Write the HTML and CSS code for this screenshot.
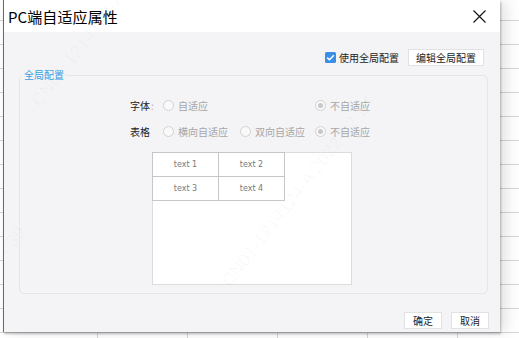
FILE: index.html
```html
<!DOCTYPE html>
<html lang="zh">
<head>
    <meta charset="UTF-8">
    <title>PC端自适应属性</title>
    <link rel="stylesheet" href="styles.css">
</head>
<body>
    <div class="dialog">
        <div class="titlebar">
            <span class="title">PC端自适应属性</span>
            <svg class="close" width="13" height="13" viewBox="0 0 13 13">
                <path d="M0.5 0.5 L12.5 12.5 M12.5 0.5 L0.5 12.5" stroke="#111" stroke-width="1.1" fill="none"/>
            </svg>
        </div>
        <div class="content">
            <div class="toprow">
                <label class="use">
                    <span class="check">
                        <svg width="11" height="11" viewBox="0 0 11 11">
                            <rect width="11" height="11" rx="1.5" fill="#3a8ee6"/>
                            <path d="M2.2 5.6 L4.5 7.8 L8.8 3.2" stroke="#fff" stroke-width="1.5" fill="none"/>
                        </svg>
                    </span>
                    使用全局配置
                </label>
                <div class="btn">编辑全局配置</div>
            </div>
            <fieldset class="group">
                <legend>全局配置</legend>
                <div class="form">
                    <div class="label">字体<span class="colon">:</span></div>
                    <div class="opt"><span class="radio"></span>自适应</div>
                    <div class="opt"></div>
                    <div class="opt"><span class="radio on"></span>不自适应</div>

                    <div class="label">表格</div>
                    <div class="opt"><span class="radio"></span>横向自适应</div>
                    <div class="opt"><span class="radio"></span>双向自适应</div>
                    <div class="opt"><span class="radio on"></span>不自适应</div>
                </div>
                <div class="preview">
                    <table class="cells">
                        <tr><td>text 1</td><td>text 2</td></tr>
                        <tr><td>text 3</td><td>text 4</td></tr>
                    </table>
                </div>
            </fieldset>
        </div>
        <div class="footer">
            <div class="btn small">确定</div>
            <div class="btn small">取消</div>
        </div>
        <!-- 水印 -->
        <span class="mark m1">CN01-1214124-A 2022-02-24</span>
        <span class="mark m2">CN01-1214124-A 2022-02-24</span>
        <span class="mark m3">CN01-1214124-A 2022-02-24 14:39</span>
    </div>
</body>
</html>
```

FILE: styles.css
```css
html, body {
    margin: 0;
    padding: 0;
}
body {
    width: 519px;
    height: 338px;
    overflow: hidden;
    font-family: "Noto Sans CJK SC", "Liberation Sans", sans-serif;
    background-color: #fff;
    background-image:
        repeating-linear-gradient(to bottom, transparent 0, transparent 23px, #d6d6d6 23px, #d6d6d6 24px),
        repeating-linear-gradient(to right, transparent 0, transparent 89px, #d6d6d6 89px, #d6d6d6 90px);
    background-position: 0 -3px, 8px 0;
}
.dialog {
    position: relative;
    margin-left: 3px;
    width: 496px;
    height: 332px;
    display: flex;
    flex-direction: column;
    background: #f4f4f6;
    border-left: 1px solid #6a6a6a;
    box-shadow: 1px 2px 2px rgba(0, 0, 0, 0.25), 6px 0 14px rgba(0, 0, 0, 0.12);
    overflow: hidden;
}
.titlebar {
    height: 32px;
    flex: none;
    background: #fff;
    display: flex;
    align-items: center;
    justify-content: space-between;
    padding: 0 14px 0 4px;
}
.title {
    font-size: 15px;
    color: #000;
    letter-spacing: 0.1px;
}
.close {
    display: block;
}
.content {
    flex: 1;
    padding: 0 12px 0 15px;
}
.toprow {
    height: 21px;
    padding: 15px 4px 0 0;
    display: flex;
    align-items: center;
    justify-content: flex-end;
    gap: 9px;
}
.use {
    display: flex;
    align-items: center;
    font-size: 10px;
    color: #222;
    gap: 3px;
}
.check svg {
    display: block;
}
.btn {
    font-size: 10px;
    color: #222;
    background: #fff;
    border: 1px solid #e2e2e4;
    height: 15px;
    line-height: 15px;
    padding: 0 7px;
    text-align: center;
}
.group {
    margin: 0;
    padding: 0 0 0 2px;
    height: 224px;
    border: 1px solid #e6e6e9;
    border-radius: 5px;
}
.group legend {
    font-size: 10px;
    line-height: 14px;
    color: #37a2e3;
    padding: 0 2px;
}
.form {
    display: grid;
    grid-template-columns: 33px 77px 75px auto;
    grid-auto-rows: 20px;
    row-gap: 6px;
    margin: 13px 0 0 108px;
    font-size: 10px;
}
.label {
    display: flex;
    align-items: center;
    color: #222;
}
.colon {
    color: #c4a5c4;
    margin-left: 1px;
}
.opt {
    display: flex;
    align-items: center;
    gap: 4px;
    color: #a6a6a6;
}
.radio {
    width: 9px;
    height: 9px;
    border: 1px solid #d2d2d2;
    border-radius: 50%;
    background: #f9f9f9;
    position: relative;
}
.radio.on::after {
    content: "";
    position: absolute;
    left: 2px;
    top: 2px;
    width: 5px;
    height: 5px;
    border-radius: 50%;
    background: #c8c8c8;
}
.preview {
    margin: 11px 0 0 130px;
    width: 198px;
    height: 131px;
    background: #fff;
    border: 1px solid #dcdcdc;
}
.cells {
    border-collapse: collapse;
    margin: -1px 0 0 -1px;
}
.cells td {
    width: 65px;
    height: 23px;
    padding: 0;
    border: 1px solid #c6c6c6;
    text-align: center;
    font-family: "DejaVu Sans", sans-serif;
    font-size: 8px;
    color: #7a7a7a;
}
.footer {
    height: 20px;
    flex: none;
    display: flex;
    align-items: flex-start;
    justify-content: flex-end;
    gap: 9px;
    padding: 0 11px 0 0;
}
.btn.small {
    width: 22px;
}
.mark {
    position: absolute;
    font-family: "Liberation Sans", sans-serif;
    font-size: 18px;
    color: rgba(0, 0, 0, 0.03);
    white-space: nowrap;
    transform: rotate(-52deg);
    transform-origin: left bottom;
    pointer-events: none;
}
.m1 { left: 40px; top: 90px; }
.m2 { left: 230px; top: 270px; }
.m3 { left: -150px; top: 440px; }
```
